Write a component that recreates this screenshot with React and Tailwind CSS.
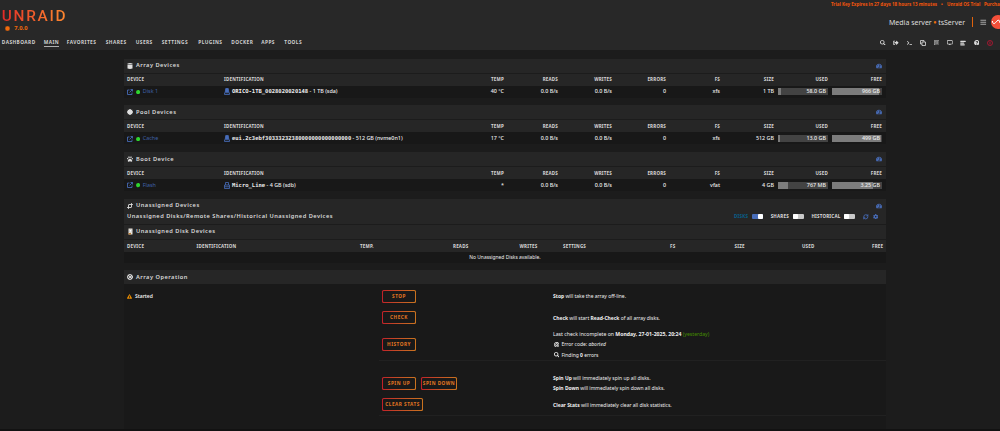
import React from "react";
import { FaSearch, FaSignOutAlt, FaTerminal, FaRegClone, FaRegListAlt, FaDesktop, FaQuestionCircle, FaCog, FaPaw, FaTachometerAlt, FaBullseye, FaExclamationTriangle, FaCertificate, FaBars, FaCircle } from "react-icons/fa";
import { RefreshCw, LifeBuoy, Crop, TextAlignStart } from "lucide-react";

const COLS = "grid grid-cols-[97px_220px_60px_54px_54px_54px_54px_54px_54px_54px] pl-[3px] pr-1 items-center";
const HEAD = "bg-[#262626] text-[4.5px] font-bold tracking-[0.2px] text-[#d6d6d6]";

function Bar({ text, fill }) {
  return (
    <div className="ml-1 h-[7px] bg-[#434343] grid">
      <div className="col-start-1 row-start-1 bg-[#7c7c7c]" style={{ width: fill + "%" }} />
      <div className="col-start-1 row-start-1 pr-0.5 leading-[7px] text-right z-10">{text}</div>
    </div>
  );
}

function OpenIcon() {
  return (
    <svg viewBox="0 0 12 12" className="w-[6px] h-[6px] shrink-0 text-[#486dba]" fill="none" stroke="currentColor" strokeWidth="1.7">
      <path d="M5 2H1v9h9V7" />
      <path d="M7 1h4v4M11 1L5 7" />
    </svg>
  );
}

function DatabaseIcon() {
  return (
    <svg viewBox="0 0 12 12" className="w-[6px] h-[6px]" fill="currentColor">
      <path d="M1 1q5-1.6 10 0v1.6H1zM1 3.6h10v7.4q-5 1.6-10 0z" />
    </svg>
  );
}

function DriveIcon({ flash }) {
  return (
    <svg viewBox="0 0 12 14" className="w-[6px] h-[7px] shrink-0 text-[#486dba]" fill="none" stroke="currentColor" strokeWidth="1.6">
      {flash ? (
        <>
          <path d="M3 6V1h6v5M1 6h10v7H1z" />
          <path d="M1 9.5h10" />
        </>
      ) : (
        <>
          <path d="M3.5 1h5l1 7h-7z" fill="currentColor" />
          <path d="M1 9.5h10V13H1z" />
        </>
      )}
    </svg>
  );
}

function Title({ icon, children, gauge }) {
  return (
    <div className="h-[14px] bg-[#262626] flex items-center justify-between pl-[3px] pr-1">
      <div className="flex items-center">
        <span className="w-[9px] text-[6px] text-[#dedede]">{icon}</span>
        <span className="pt-[0.4px] text-[5.7px] font-semibold tracking-[0.48px] text-[#dadada] leading-none">{children}</span>
      </div>
      {gauge && <FaTachometerAlt className="text-[6px] text-[#486dba]" />}
    </div>
  );
}

function DeviceTable({ icon, title, name, id, tail, temp, fs, size, used, usedPct, free, freePct, flash }) {
  return (
    <section className="h-[39px] mb-[7.8px]">
      <Title icon={icon} gauge>{title}</Title>
      <div className={COLS + " mt-px h-3 " + HEAD}>
        <span>DEVICE</span>
        <span>IDENTIFICATION</span>
        {["TEMP", "READS", "WRITES", "ERRORS", "FS", "SIZE", "USED", "FREE"].map((h) => (
          <span key={h} className="text-right">{h}</span>
        ))}
      </div>
      <div className={COLS + " h-[12px] pt-[0.6px] bg-[#181818] text-[5.4px] font-medium text-right text-[#eeeeee]"}>
        <div className="flex items-center text-[#3f61a8] font-normal">
          <OpenIcon />
          <FaCircle className="ml-[2.5px] mr-[3px] text-[4.3px] text-[#2fd42f]" />
          {name}
        </div>
        <div className="flex items-center gap-[2px]">
          <DriveIcon flash={flash} />
          <span className="whitespace-pre"><span className="text-[5.5px] font-bold font-['DejaVu_Sans_Mono',monospace]">{id}</span>{tail}</span>
        </div>
        <span>{temp}</span>
        <span>0.0 B/s</span>
        <span>0.0 B/s</span>
        <span>0</span>
        <span>{fs}</span>
        <span>{size}</span>
        <Bar text={used} fill={usedPct} />
        <Bar text={free} fill={freePct} />
      </div>
    </section>
  );
}

function Toggle({ label, on }) {
  return (
    <div className="flex items-center gap-1">
      <span className={on ? "text-[#08608c]" : "text-[#dddddd]"}>{label}</span>
      <span className={"w-[11px] h-[5px] rounded-[1px] flex " + (on ? "bg-[#486dba] justify-end" : "bg-[#c9c9c9]")}>
        <span className="w-[5px] h-[5px] rounded-[1px] bg-white" />
      </span>
    </div>
  );
}

function Button({ children, wide }) {
  return (
    <span className={"h-[13px] rounded-[1.5px] p-px bg-linear-to-r from-[#c01f28] to-[#c9731f] " + (wide || "w-[34px]")}>
      <span className="flex h-full items-center justify-center rounded-[1px] bg-[#191919]">
        <span className="text-[4.7px] font-bold tracking-[0.5px] text-[#e37622] whitespace-nowrap leading-none">{children}</span>
      </span>
    </span>
  );
}

const NAV = [
  ["DASHBOARD", "w-[42px]"], ["MAIN", "w-[23px]"], ["FAVORITES", "w-[39px]"], ["SHARES", "w-[30px]"], ["USERS", "w-[26px]"],
  ["SETTINGS", "w-[36.5px]"], ["PLUGINS", "w-[33px]"], ["DOCKER", "w-[30px]"], ["APPS", "w-[23px]"], ["TOOLS", "w-[20px]"],
];

export default function App() {
  return (
    <div className="w-[1000px] h-[431px] overflow-hidden bg-[#1c1c1c] text-[#eeeeee] font-['Noto_Sans',sans-serif] leading-none flex flex-col">
      <header className="h-[50px] shrink-0 bg-[#282828] flex justify-between">
        <div className="flex flex-col pl-[1.8px]">
          <div className="mt-[9px] h-[15px] text-[15.4px] leading-[15px] font-['Roboto',sans-serif] font-medium tracking-[1.7px] bg-linear-to-r from-[#e22828] to-[#ff8c2f] bg-clip-text text-transparent w-[68px]">UNRAID</div>
          <div className="mt-px h-[7px] pl-[3.5px] flex items-center text-[5.8px] font-bold text-[#f06a0c]">
            <FaCertificate className="text-[5px] mr-[4px]" />7.0.0
          </div>
          <nav className="mt-[7px] flex text-[4.8px] font-bold tracking-[0.43px] text-[#cfcfcf]">
            {NAV.map(([n, w]) => (
              <span key={n} className={w}>
                <span className={"inline-block h-[8px] leading-[6px] " + (n === "MAIN" ? "border-b border-[#b0b0b0]" : "")}>{n}</span>
              </span>
            ))}
          </nav>
        </div>
        <div className="w-[180px] flex flex-col">
          <div className="mt-px h-[6px] flex whitespace-nowrap text-[4.5px] font-bold text-[#f0550c] leading-[6px] overflow-hidden">
            <span className="w-[121px] pl-[11px] shrink-0">Trial Key Expires in 27 days 18 hours 13 minutes</span>
            <span className="w-[6px] shrink-0">•</span>
            <span className="w-[37px] shrink-0">Unraid OS Trial</span>
            <span>Purchase</span>
          </div>
          <div className="mt-[8px] h-[14px] pl-[69px] flex items-center text-[7px] text-[#dddddd] whitespace-nowrap">
            <span className="w-[83px] shrink-0">Media server <span className="font-black text-[#f0700c]">•</span> tsServer</span>
            <span className="w-px h-[10px] bg-[#e0620c] shrink-0" />
            <FaBars className="ml-[7px] text-[6.5px] text-[#a5a5a5] shrink-0" />
            <svg viewBox="0 0 14 14" className="ml-1 w-[14px] h-[14px] shrink-0">
              <circle cx="7" cy="7" r="7" fill="#f5503a" />
              <path d="M1.5 6v1.5q1.6 2.4 3.2 0L7 5q2 0 2 3" fill="none" stroke="#fff" strokeWidth="1" />
            </svg>
          </div>
          <div className="mt-[10px] pl-[60px] h-[7px] flex items-center text-[5.6px] text-[#dddddd]">
            {[FaSearch, FaSignOutAlt, FaTerminal].map((I, i) => (
              <span key={i} className="w-[13.4px]"><I /></span>
            ))}
            <span className="w-[13.4px]">
              <svg viewBox="0 0 12 12" className="w-[6px] h-[6px]" fill="none" stroke="currentColor" strokeWidth="1.6"><path d="M4 4h7v7H4zM8 4V1H1v7h3" /></svg>
            </span>
            {[FaRegListAlt, FaDesktop].map((I, i) => (
              <span key={i} className="w-[13.4px]"><I /></span>
            ))}
            <span className="w-[13.4px]"><TextAlignStart size={6} strokeWidth={5} /></span>
            <span className="w-[13.4px]"><FaQuestionCircle /></span>
            <svg viewBox="0 0 12 12" className="w-[6px] h-[6px] text-[#c01434]" fill="none" stroke="currentColor" strokeWidth="1.6"><circle cx="6" cy="6" r="5" /><path d="M6 3v6" /></svg>
          </div>
        </div>
      </header>

      <main className="mt-[8.6px] ml-[124px] w-[762px] flex flex-col">
        <DeviceTable icon={<DatabaseIcon />} title="Array Devices" name="Disk 1" id="ORICO-1TB_0028020020148" tail=" - 1 TB (sda)" temp="40 °C" fs="xfs" size="1 TB" used="58.0 GB" usedPct={6} free="966 GB" freePct={94} />
        <DeviceTable icon={<FaCertificate />} title="Pool Devices" name="Cache" id="eui.2c3ebf30333232380000000000000000" tail=" - 512 GB (nvme0n1)" temp="17 °C" fs="xfs" size="512 GB" used="13.0 GB" usedPct={3} free="499 GB" freePct={97} />
        <DeviceTable flash icon={<FaPaw />} title="Boot Device" name="Flash" id="Micro_Line" tail=" - 4 GB (sdb)" temp="*" fs="vfat" size="4 GB" used="767 MB" usedPct={20} free="3.25 GB" freePct={81} />

        <section className="h-[64px] mb-[7.3px] flex flex-col">
          <Title icon={<Crop size={6} strokeWidth={3.5} className="-scale-x-100" />} gauge>Unassigned Devices</Title>
          <div className="h-[11px] bg-[#262626] flex items-center justify-between pl-[3px] pr-[8px] pb-[3.5px]">
            <span className="text-[5.7px] font-semibold tracking-[0.47px] text-[#dadada]">Unassigned Disks/Remote Shares/Historical Unassigned Devices</span>
            <div className="flex items-center gap-[7.6px] text-[4.5px] font-bold tracking-[0.2px]">
              <Toggle label="DISKS" on />
              <Toggle label="SHARES" />
              <Toggle label="HISTORICAL" />
              <span className="flex gap-1 text-[5.4px] text-[#486dba]"><RefreshCw size={5.6} strokeWidth={3.6} /><FaCog /></span>
            </div>
          </div>
          <div className="mt-px">
            <Title icon={<svg viewBox="0 0 10 12" className="ml-px w-[5px] h-[7px]"><path d="M1 0h8v12H1z" fill="#e8e3da" /><circle cx="5" cy="4.5" r="2.5" fill="#fff" stroke="#aaa" /><path d="M1 9h5v3H1z" fill="#b57a35" /></svg>}>Unassigned Disk Devices</Title>
          </div>
          <div className={"mt-px h-3 flex items-center pl-[3px] " + HEAD}>
            <span className="w-[69.5px]">DEVICE</span>
            <span className="w-[163.5px]">IDENTIFICATION</span>
            <span className="w-[93px]">TEMP.</span>
            <span className="w-[66.5px]">READS</span>
            <span className="w-[43.5px]">WRITES</span>
            <span className="w-[107px]">SETTINGS</span>
            <span className="w-[64.5px]">FS</span>
            <span className="w-[67.5px]">SIZE</span>
            <span className="w-[70px]">USED</span>
            <span>FREE</span>
          </div>
          <div className="h-[11px] bg-[#181818] text-center text-[4.9px] leading-[11px]">No Unassigned Disks available.</div>
        </section>

        <section className="h-[159px] bg-[#191919]">
          <Title icon={<LifeBuoy size={6} strokeWidth={4} />}>Array Operation</Title>
          <div className="grid grid-cols-[255px_171px_1fr] text-[4.98px]">
            <div className="pl-[3px] h-[24px] flex items-center gap-[3px] font-semibold"><FaExclamationTriangle className="text-[5px] text-[#e68a00]" />Started</div>
            <div className="col-span-2 flex flex-col">
              <div className="border-b border-[#212121] h-[77px]">
                <Row h="h-[24px]" actions={<Button>STOP</Button>}><p><b>Stop</b> will take the array off-line.</p></Row>
                <Row h="h-[19px]" actions={<Button>CHECK</Button>}><p><b>Check</b> will start <b>Read-Check</b> of all array disks.</p></Row>
                <Row h="h-[34px]" actions={<Button>HISTORY</Button>}>
                  <p className="text-[5.15px]">Last check incomplete on <b>Monday, 27-01-2025, 20:24</b> <span className="text-[#458c00]">(yesterday)</span></p>
                  <p className="flex items-center gap-[2px] pl-px"><FaBullseye className="text-[5.4px]" /><span>Error code: <i>aborted</i></span></p>
                  <p className="flex items-center gap-[2px] pl-px"><FaSearch className="text-[5.4px]" /><span>Finding <b>0</b> errors</span></p>
                </Row>
              </div>
              <div className="border-b border-[#212121] h-[55px] pt-[11px]">
                <Row h="h-[22px]" actions={<><Button>SPIN UP</Button><Button wide="w-[36px]">SPIN DOWN</Button></>}>
                  <p><b>Spin Up</b> will immediately spin up all disks.</p>
                  <p><b>Spin Down</b> will immediately spin down all disks.</p>
                </Row>
                <Row h="h-[21px]" actions={<Button wide="w-[41px]">CLEAR STATS</Button>}><p><b>Clear Stats</b> will immediately clear all disk statistics.</p></Row>
              </div>
            </div>
          </div>
        </section>
      </main>
      <footer className="mt-auto h-[2px] shrink-0 bg-[#121212]" />
    </div>
  );
}

function Row({ h, actions, children }) {
  return (
    <div className={"grid grid-cols-[174px_1fr] items-center " + h}>
      <div className="flex gap-[5px] pl-[3px]">{actions}</div>
      <div className="leading-[10.6px] pt-[0.4px] text-[#f0f0f0]">{children}</div>
    </div>
  );
}
